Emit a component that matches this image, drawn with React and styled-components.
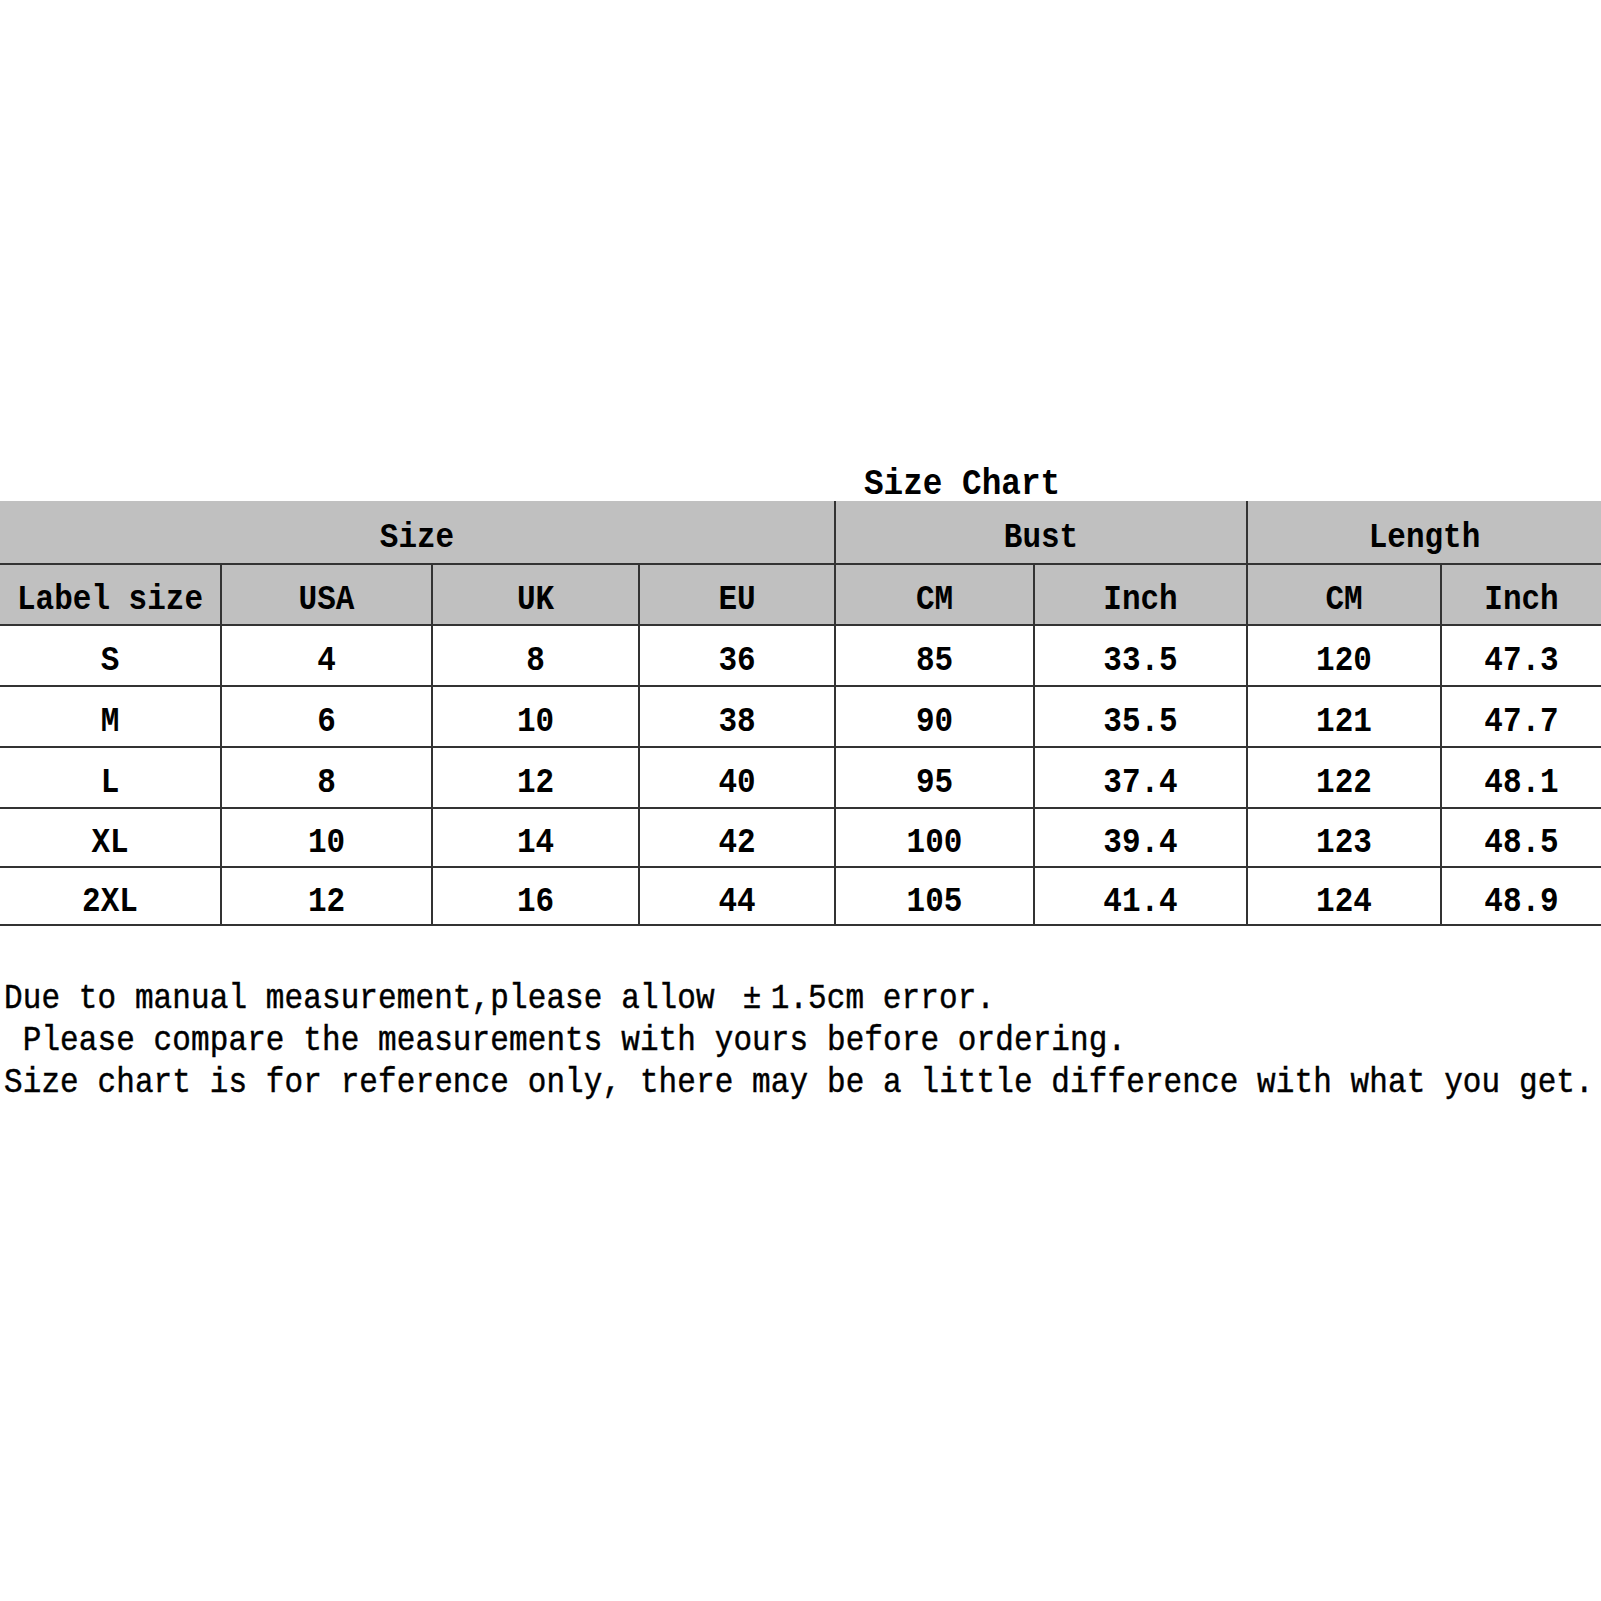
import React from "react";
import styled, { createGlobalStyle } from "styled-components";

const Global = createGlobalStyle`
  html, body { margin: 0; padding: 0; background: #fff; }
  body { font-family: "Liberation Mono", "DejaVu Sans Mono", monospace; color: #000; }
`;

const Page = styled.div`
  padding-top: 465px;
  width: 1601px;
`;

const Title = styled.div`
  padding-left: 864px;
  padding-top: 4px;
  font-size: 32.7px;
  line-height: 32px;
  font-weight: 700;
  white-space: pre;
`;

const Grid = styled.div`
  display: grid;
  grid-template-columns: 220px 209px 205px 194px 197px 211px 192px 1fr;
  grid-template-rows: 62px 59px 59px 59px 59px 57px 56px;
  column-gap: 2px;
  row-gap: 2px;
  background: #333;
  border-bottom: 2px solid #333;
`;

const Cell = styled.div`
  display: flex;
  align-items: center;
  justify-content: center;
  padding-top: 10px;
  box-sizing: border-box;
  background: ${(p) => (p.$head ? "#c0c0c0" : "#fff")};
  grid-column: ${(p) => (p.$span ? `span ${p.$span}` : "auto")};
  font-size: 31px;
  font-weight: 700;
  white-space: pre;
`;

const Tall = styled.span`
  display: inline-block;
  transform: scaleY(1.15);
`;

const Notes = styled.div`
  margin-top: 52px;
`;

const NoteLine = styled.div`
  font-size: 31px;
  line-height: 42px;
  letter-spacing: 0.1px;
  padding-left: 4px;
  white-space: pre;
  -webkit-text-stroke: 0.4px #000;
  transform: scaleY(1.15);
`;

const Wide = styled.span`
  display: inline-block;
  width: 2ch;
  text-align: center;
`;

const groups = [
  { label: "Size", span: 4 },
  { label: "Bust", span: 2 },
  { label: "Length", span: 2 },
];
const subHeads = ["Label size", "USA", "UK", "EU", "CM", "Inch", "CM", "Inch"];
const rows = [
  ["S", "4", "8", "36", "85", "33.5", "120", "47.3"],
  ["M", "6", "10", "38", "90", "35.5", "121", "47.7"],
  ["L", "8", "12", "40", "95", "37.4", "122", "48.1"],
  ["XL", "10", "14", "42", "100", "39.4", "123", "48.5"],
  ["2XL", "12", "16", "44", "105", "41.4", "124", "48.9"],
];

export default function App() {
  return (
    <Page>
      <Global />
      <Title>
        <Tall>Size Chart</Tall>
      </Title>
      <Grid>
        {groups.map((g) => (
          <Cell key={g.label} $head $span={g.span}>
            <Tall>{g.label}</Tall>
          </Cell>
        ))}
        {subHeads.map((h, i) => (
          <Cell key={"h" + i} $head>
            <Tall>{h}</Tall>
          </Cell>
        ))}
        {rows.map((r, ri) =>
          r.map((v, ci) => (
            <Cell key={ri + "-" + ci}>
              <Tall>{v}</Tall>
            </Cell>
          ))
        )}
      </Grid>
      <Notes>
        <NoteLine>
          Due to manual measurement,please allow <Wide>±</Wide>1.5cm error.
        </NoteLine>
        <NoteLine> Please compare the measurements with yours before ordering.</NoteLine>
        <NoteLine>
          Size chart is for reference only, there may be a little difference with what you get.
        </NoteLine>
      </Notes>
    </Page>
  );
}
